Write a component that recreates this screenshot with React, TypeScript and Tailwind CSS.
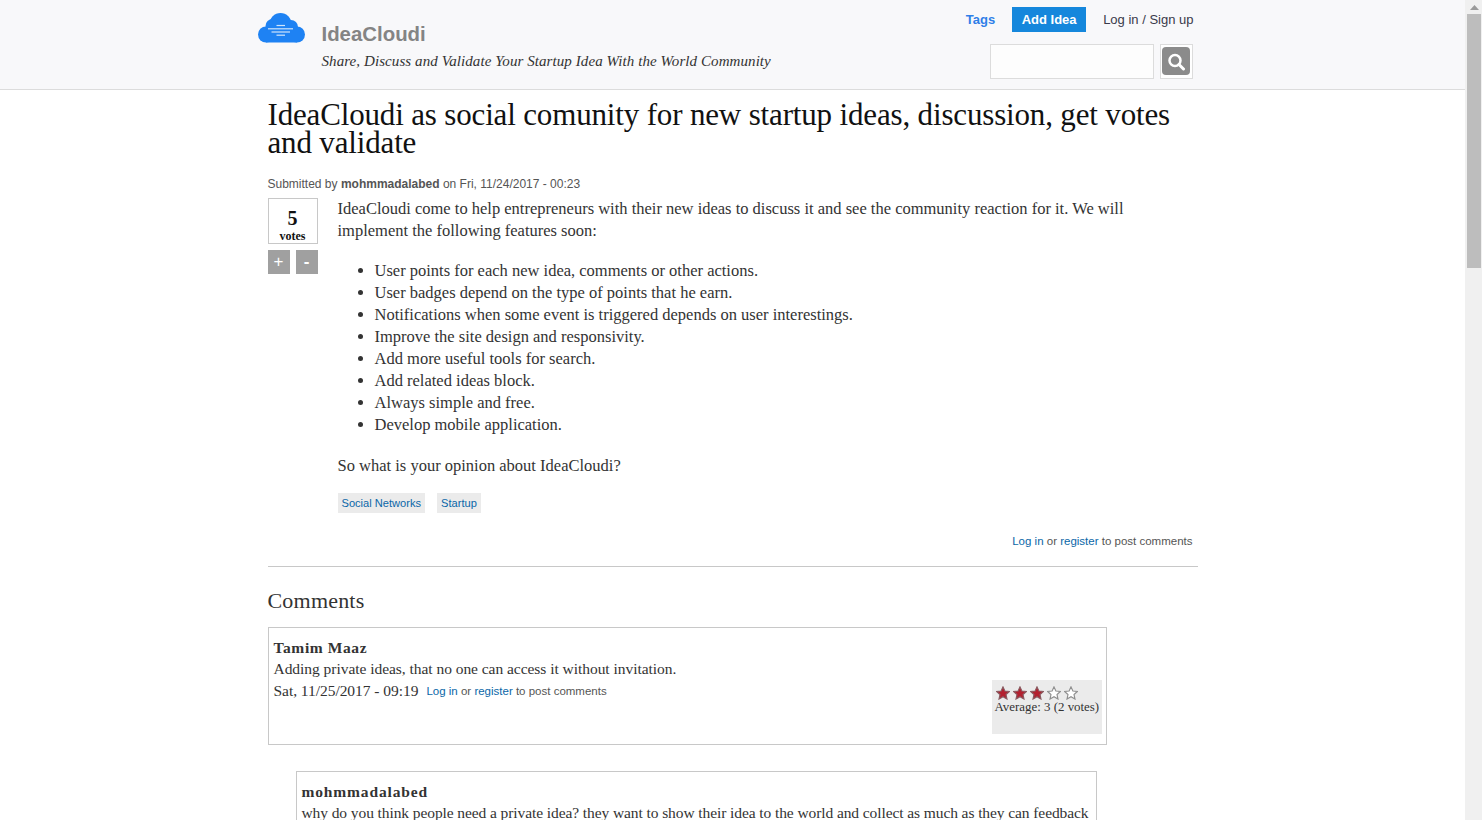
const serif = "font-['Liberation_Serif',serif]";
const sans = "font-['Liberation_Sans',Arial,sans-serif]";

function Cloud() {
  return (
    <svg width="47" height="30" viewBox="0 0 47 30" className="block">
      <g fill="#1e82f3">
        <circle cx="8" cy="21.500" r="8" />
        <circle cx="14.500" cy="13" r="7" />
        <circle cx="22.500" cy="11" r="11" />
        <circle cx="33" cy="14" r="7" />
        <circle cx="39" cy="21.500" r="8" />
        <rect x="8" y="18" width="31" height="11.500" />
      </g>
      <g stroke="#cfe5fc" strokeWidth="1.200">
        <path d="M18.500 12.500H27" />
        <path d="M10 15.800H35" />
        <path d="M13.500 19H32" />
        <path d="M18.500 22.200H27" />
      </g>
    </svg>
  );
}

function Star({ on }: { on: boolean }) {
  return (
    <svg width="14" height="14" viewBox="0 0 24 24" className="block">
      <path
        d="M12 1.500L15.200 8.600L23 9.400L17.200 14.600L18.800 22.300L12 18.400L5.200 22.300L6.800 14.600L1 9.400L8.800 8.600Z"
        fill={on ? "#b3202f" : "#ffffff"}
        stroke={on ? "#8a5a60" : "#8f8f8f"}
        strokeWidth="2"
      />
    </svg>
  );
}

function LoginLinks() {
  return (
    <span className={`${sans} text-[11.5px] leading-[14px] text-[#555]`}>
      <span className="text-[#0a67a8]">Log in</span> or <span className="text-[#0a67a8]">register</span> to post comments
    </span>
  );
}

const bullets = [
  "User points for each new idea, comments or other actions.",
  "User badges depend on the type of points that he earn.",
  "Notifications when some event is triggered depends on user interestings.",
  "Improve the site design and responsivity.",
  "Add more useful tools for search.",
  "Add related ideas block.",
  "Always simple and free.",
  "Develop mobile application.",
];

export default function App() {
  return (
    <div className="flex h-[820px] w-[1482px] overflow-hidden bg-white">
      <div className="h-full w-[1465px] overflow-hidden">
        <header className="h-[90px] border-b border-[#dcdcdc] bg-[#f8f8fa]">
          <div className="mx-auto flex w-[950px] justify-between pr-[15px]">
            <div className="flex">
              <div className="mr-[17px] pt-[13px]">
                <Cloud />
              </div>
              <div>
                <div className={`${sans} mt-[22px] text-[20.4px] leading-[24px] font-bold text-[#848484]`}>IdeaCloudi</div>
                <div className={`${serif} mt-[6px] text-[15px] leading-[18px] tracking-[0.08px] text-[#333] italic`}>
                  Share, Discuss and Validate Your Startup Idea With the World Community
                </div>
              </div>
            </div>
            <div className="flex flex-col items-end">
              <div className={`${sans} mr-[-1px] mt-[7px] flex h-[25px] items-center text-[13px]`}>
                <span className="font-bold text-[#2f7fe8]">Tags</span>
                <span className="ml-[17px] flex h-[25px] w-[74px] items-center justify-center bg-[#1587dc] font-bold text-white">Add Idea</span>
                <span className="ml-[17px] text-[#3a3a4a]">Log in / Sign up</span>
              </div>
              <div className="mt-[12px] flex">
                <div className="h-[35px] w-[164px] border border-[#dcdcdc] bg-[#fdfdfd]"></div>
                <div className="ml-[6px] flex h-[35px] w-[33px] items-center justify-center border border-[#dcdcdc] bg-white pb-[1px]">
                  <div className="flex h-[28px] w-[28px] items-center justify-center rounded-[4px] bg-[#8b8b8b]">
                    <svg width="20" height="20" viewBox="0 0 20 20">
                      <circle cx="9" cy="9.500" r="5.500" fill="none" stroke="#fff" strokeWidth="2.500" />
                      <path d="M13 13.500L17.500 18" stroke="#fff" strokeWidth="3" strokeLinecap="round" />
                    </svg>
                  </div>
                </div>
              </div>
            </div>
          </div>
        </header>

        <main className="mx-auto w-[930px]">
          <h1 className={`${serif} mt-[11px] text-[31px] leading-[28px] tracking-[-0.16px] text-[#111]`}>
            IdeaCloudi as social comunity for new startup ideas, discussion, get votes and validate
          </h1>
          <div className={`${sans} mt-[20px] text-[12px] leading-[14px] text-[#555]`}>
            Submitted by <b>mohmmadalabed</b> on Fri, 11/24/2017 - 00:23
          </div>

          <div className="mt-[7px] flex">
            <div className="w-[50px] shrink-0">
              <div className={`${serif} flex h-[46px] w-[50px] flex-col items-center border border-[#c8c8c8] font-bold text-[#111]`}>
                <span className="mt-[9px] text-[20px] leading-[20px]">5</span>
                <span className="mt-[2px] text-[12px] leading-[12px]">votes</span>
              </div>
              <div className={`${sans} mt-[6px] flex justify-between text-[17px] text-white`}>
                <span className="flex h-[24px] w-[22px] items-center justify-center bg-[#a0a0a0]">+</span>
                <span className="flex h-[24px] w-[22px] items-center justify-center bg-[#a0a0a0] font-bold">-</span>
              </div>
            </div>
            <div className={`${serif} ml-[20px] text-[16.5px] leading-[22px] text-[#333]`}>
              <p className="w-[800px]">
                IdeaCloudi come to help entrepreneurs with their new ideas to discuss it and see the community reaction for it. We will implement the following features soon:
              </p>
              <ul className="mt-[18px] list-disc pl-[37px]">
                {bullets.map((b) => (
                  <li key={b}>{b}</li>
                ))}
              </ul>
              <p className="mt-[19px]">So what is your opinion about IdeaCloudi?</p>
              <div className={`${sans} mt-[16px] flex gap-[12px] text-[11.1px] leading-[20px] text-[#0a67a8]`}>
                <span className="bg-[#ebebeb] px-[4px]">Social Networks</span>
                <span className="bg-[#ebebeb] px-[4px]">Startup</span>
              </div>
            </div>
          </div>

          <div className="mt-[14px] border-b border-[#c8c8c8] pb-[15px] pr-[5px] text-right">
            <LoginLinks />
          </div>

          <h2 className={`${serif} mt-[21px] text-[22px] leading-[26px] tracking-[0.2px] text-[#333]`}>Comments</h2>

          <section className={`${serif} mt-[13px] flex h-[118px] w-[839px] justify-between border border-[#c8c8c8] py-[4px] pl-[5px] pr-[4px] text-[15.5px] leading-[21px] tracking-[-0.04px] text-[#333]`}>
            <div>
              <div className="mt-[5px] font-bold tracking-[0.6px]">Tamim Maaz</div>
              <div>Adding private ideas, that no one can access it without invitation.</div>
              <div className="mt-[1px] flex items-start">
                <span>Sat, 11/25/2017 - 09:19</span>
                <span className="ml-[8px] mt-[3px] block leading-[14px] tracking-normal">
                  <LoginLinks />
                </span>
              </div>
            </div>
            <div className="mt-[48px] h-[54px] w-[110px] bg-[#ebebeb] px-[3px] pt-[6px] text-[12.9px] leading-[15px] tracking-normal">
              <div className="flex gap-[3px] pl-[1px]">
                {[1, 2, 3, 4, 5].map((n) => (
                  <Star key={n} on={n <= 3} />
                ))}
              </div>
              <div className="whitespace-nowrap">Average: 3 (2 votes)</div>
            </div>
          </section>

          <section className={`${serif} ml-[28px] mt-[26px] w-[801px] border border-[#c8c8c8] py-[4px] pl-[5px] pr-[4px] text-[15.5px] leading-[21px] text-[#333]`}>
            <div className="mt-[5px] font-bold tracking-[0.85px]">mohmmadalabed</div>
            <div className="whitespace-nowrap tracking-[-0.09px]">why do you think people need a private idea? they want to show their idea to the world and collect as much as they can feedback</div>
          </section>
        </main>
      </div>

      <div className="flex h-full w-[17px] flex-col items-end bg-[#f0f0f0] pr-[1px]">
        <div className="flex h-[14px] w-[14px] items-center justify-center">
          <svg width="9" height="5" viewBox="0 0 9 5"><path d="M4.500 0L9 5H0Z" fill="#9a9a9a" /></svg>
        </div>
        <div className="h-[254px] w-[14px] bg-[#bdbdbd]"></div>
      </div>
    </div>
  );
}
